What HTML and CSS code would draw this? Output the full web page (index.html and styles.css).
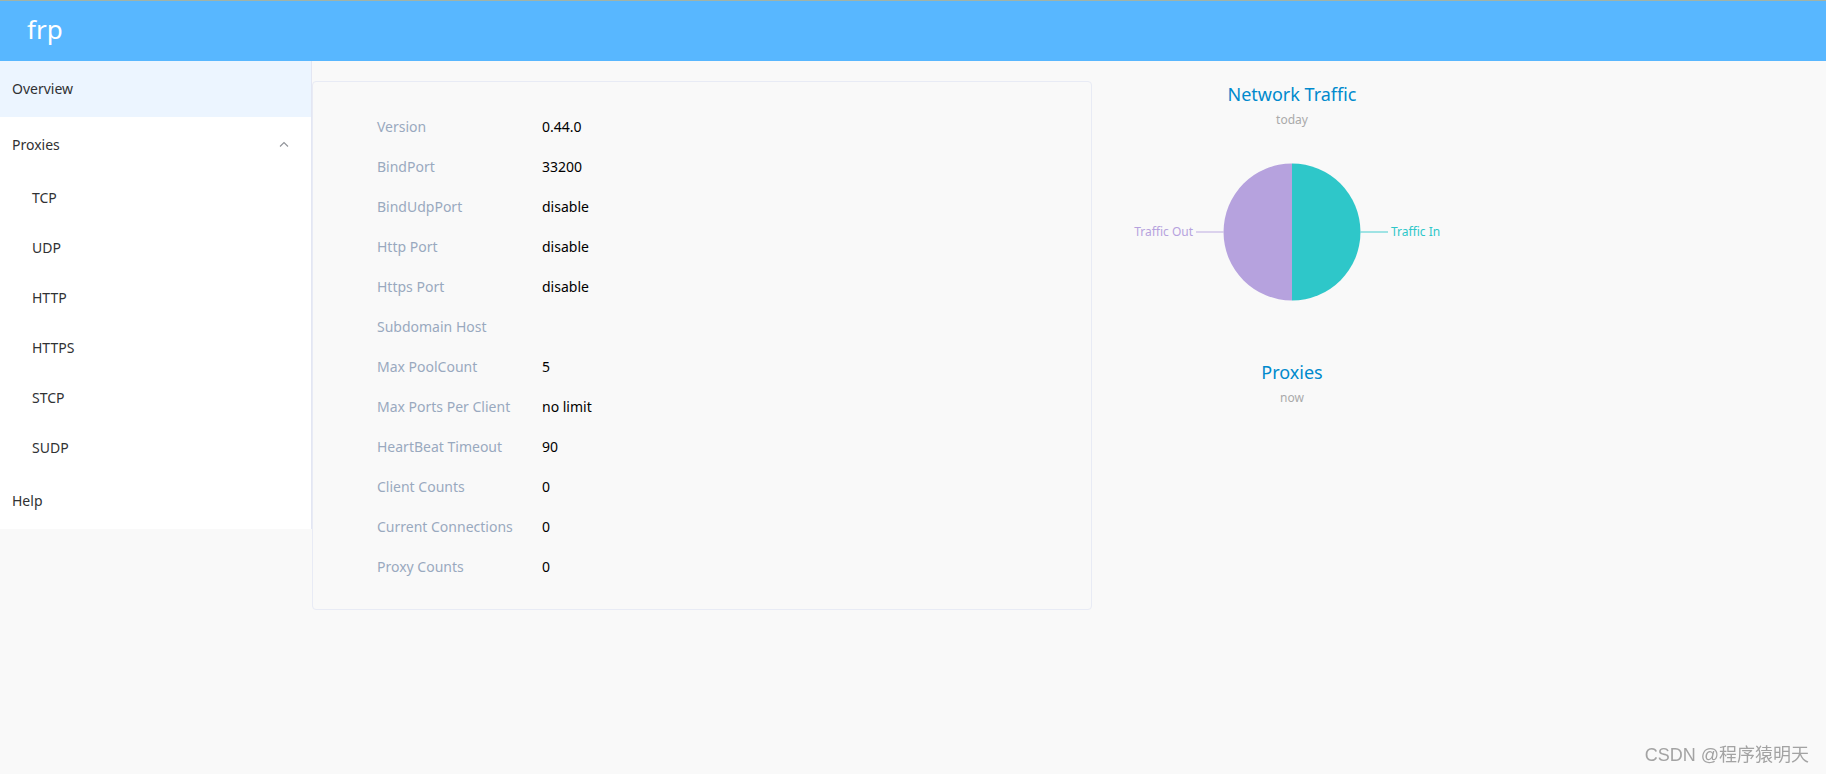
FILE: index.html
```html
<!DOCTYPE html>
<html lang="en">
<head>
<meta charset="utf-8">
<title>frp</title>
<link rel="stylesheet" href="styles.css">
</head>
<body>
<header class="header">
  <a class="brand" href="#">frp</a>
</header>
<div class="layout">
  <nav class="sidebar">
    <div class="menu-item active">Overview</div>
    <div class="menu-item submenu-title">
      <span>Proxies</span>
      <svg class="chevron" width="10" height="6" viewBox="0 0 10 6"><path d="M1 5.5 L5 1.5 L9 5.5" fill="none" stroke="#909399" stroke-width="1.1"/></svg>
    </div>
    <div class="sub-item">TCP</div>
    <div class="sub-item">UDP</div>
    <div class="sub-item">HTTP</div>
    <div class="sub-item">HTTPS</div>
    <div class="sub-item">STCP</div>
    <div class="sub-item">SUDP</div>
    <div class="menu-item">Help</div>
  </nav>
  <main class="main">
    <section class="card">
      <div class="row"><span class="label">Version</span><span class="value">0.44.0</span></div>
      <div class="row"><span class="label">BindPort</span><span class="value">33200</span></div>
      <div class="row"><span class="label">BindUdpPort</span><span class="value">disable</span></div>
      <div class="row"><span class="label">Http Port</span><span class="value">disable</span></div>
      <div class="row"><span class="label">Https Port</span><span class="value">disable</span></div>
      <div class="row"><span class="label">Subdomain Host</span><span class="value"></span></div>
      <div class="row"><span class="label">Max PoolCount</span><span class="value">5</span></div>
      <div class="row"><span class="label">Max Ports Per Client</span><span class="value">no limit</span></div>
      <div class="row"><span class="label">HeartBeat Timeout</span><span class="value">90</span></div>
      <div class="row"><span class="label">Client Counts</span><span class="value">0</span></div>
      <div class="row"><span class="label">Current Connections</span><span class="value">0</span></div>
      <div class="row"><span class="label">Proxy Counts</span><span class="value">0</span></div>
    </section>
    <section class="charts">
      <div class="chart">
        <div class="chart-title">Network Traffic</div>
        <div class="chart-sub">today</div>
        <svg class="pie" width="400" height="206" viewBox="0 0 400 206">
          <path d="M200 35.5 A68.5 68.5 0 0 0 200 172.5 Z" fill="#b6a2de"/>
          <path d="M200 35.5 A68.5 68.5 0 0 1 200 172.5 Z" fill="#2ec7c9"/>
          <line x1="104" y1="104" x2="131.5" y2="104" stroke="#b6a2de" stroke-opacity="0.6" stroke-width="1.5"/>
          <line x1="268.5" y1="104" x2="296" y2="104" stroke="#2ec7c9" stroke-opacity="0.6" stroke-width="1.5"/>
          <text class="pie-label" x="101" y="108" text-anchor="end" fill="#b6a2de">Traffic Out</text>
          <text class="pie-label" x="299" y="108" text-anchor="start" fill="#2ec7c9">Traffic In</text>
        </svg>
      </div>
      <div class="chart chart-second">
        <div class="chart-title">Proxies</div>
        <div class="chart-sub">now</div>
      </div>
    </section>
  </main>
</div>
<div class="watermark">CSDN @程序猿明天</div>
</body>
</html>
```
FILE: styles.css
```css
* { box-sizing: border-box; }
html, body { margin: 0; padding: 0; }
body {
  background: #f9f9f9;
  font-family: "Noto Sans", "Open Sans", "Noto Sans CJK SC", sans-serif;
  font-size: 14px;
  color: #303133;
  height: 774px;
  overflow: hidden;
}
.header {
  height: 61px;
  border-top: 1px solid #a2b3a6;
  background: #58b7ff;
  display: flex;
  align-items: center;
  padding-left: 27px;
}
.brand {
  color: #fff;
  text-decoration: none;
  font-size: 26px;
  line-height: 30px;
  margin-top: -5px;
}
.layout {
  display: flex;
  align-items: flex-start;
}
.sidebar {
  width: 312px;
  flex: none;
  background: #fff;
  border-right: 1px solid #e3e6f3;
}
.menu-item {
  height: 56px;
  display: flex;
  align-items: center;
  padding-left: 12px;
  padding-right: 22px;
  padding-bottom: 2px;
  color: #303133;
}
.menu-item.active { background: #ecf5ff; }
.submenu-title { justify-content: space-between; }
.chevron { display: block; margin-top: 0; }
.sub-item {
  height: 50px;
  display: flex;
  align-items: center;
  padding-left: 32px;
  padding-bottom: 2px;
  color: #303133;
}
.main {
  flex: 1;
  display: flex;
  align-items: flex-start;
  padding-top: 20px;
}
.card {
  width: 780px;
  flex: none;
  border: 1px solid #e8ebf5;
  border-radius: 4px;
  padding: 24px 0 23px 64px;
}
.row {
  height: 40px;
  display: flex;
  align-items: center;
}
.label {
  width: 165px;
  color: #99a9bf;
}
.value { color: #000; }
.charts {
  width: 400px;
  flex: none;
  display: flex;
  flex-direction: column;
  align-items: center;
  padding-top: 2px;
}
.chart {
  width: 400px;
  display: flex;
  flex-direction: column;
  align-items: center;
}
.chart-title {
  color: #008acd;
  font-size: 18px;
  line-height: 22px;
}
.chart-sub {
  color: #aaa;
  font-size: 12px;
  line-height: 16px;
  margin-top: 7px;
}
.pie { display: block; }
.pie-label {
  font-family: "Noto Sans", "Open Sans", sans-serif;
  font-size: 12px;
}
.chart-second { margin-top: 27px; }
.watermark {
  position: fixed;
  right: 17px;
  bottom: 8px;
  color: #a3a3a3;
  font-size: 18px;
  line-height: 22px;
  font-family: "Liberation Sans", "Noto Sans CJK SC", sans-serif;
}
```
